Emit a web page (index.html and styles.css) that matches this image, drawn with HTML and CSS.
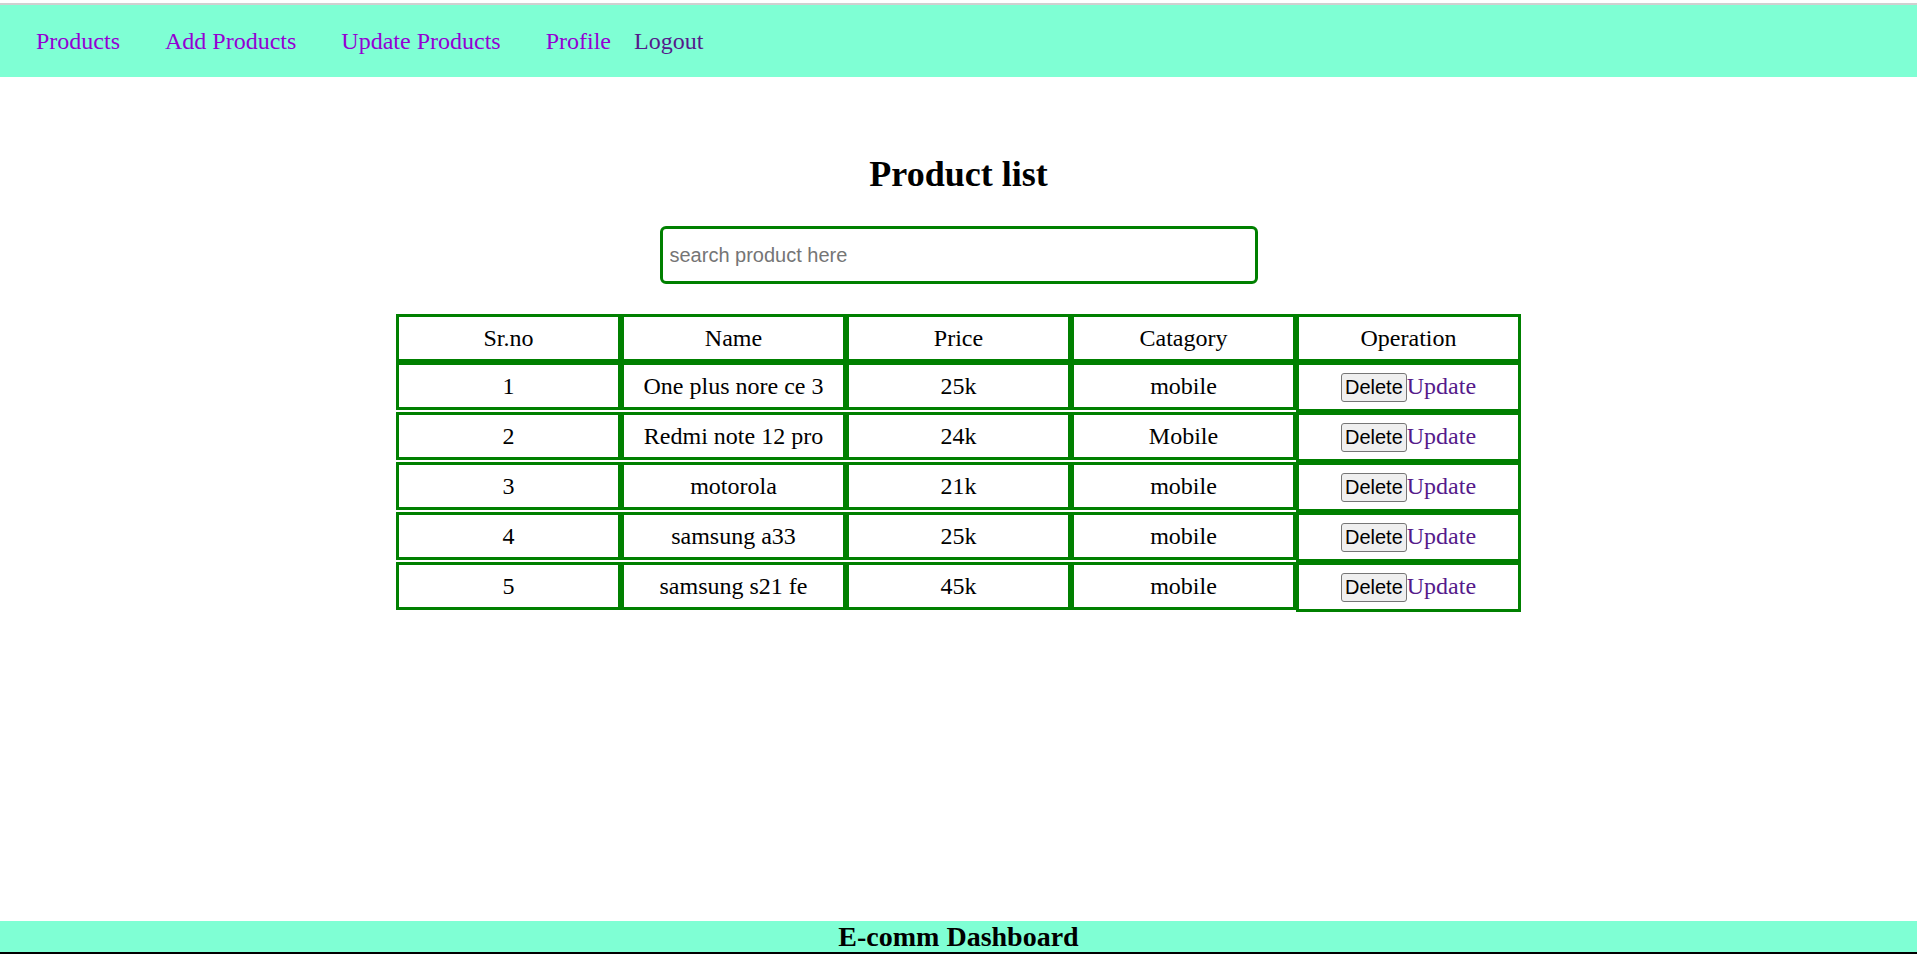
FILE: index.html
```html
<!DOCTYPE html>
<html lang="en">
<head>
<meta charset="utf-8">
<title>E-comm Dashboard</title>
<link rel="stylesheet" href="styles.css">
</head>
<body>
<div class="app">
  <nav class="nav">
    <ul class="nav-ul">
      <li class="nav-item"><a class="nav-link" href="#">Products</a></li>
      <li class="nav-item"><a class="nav-link" href="#">Add Products</a></li>
      <li class="nav-item"><a class="nav-link" href="#">Update Products</a></li>
      <li class="nav-item nav-item-tight"><a class="nav-link" href="#">Profile</a></li>
      <li class="nav-item"><a class="nav-link nav-logout" href="#">Logout</a></li>
    </ul>
  </nav>

  <main class="product-list">
    <h1 class="title">Product list</h1>
    <input class="search-box" type="text" placeholder="search product here">
    <div class="table">
      <ul class="row"><li class="cell">Sr.no</li><li class="cell">Name</li><li class="cell">Price</li><li class="cell">Catagory</li><li class="cell">Operation</li></ul>
      <ul class="row"><li class="cell">1</li><li class="cell">One plus nore ce 3</li><li class="cell">25k</li><li class="cell">mobile</li><li class="cell"><button class="btn-delete">Delete</button><a class="op-link" href="#">Update</a></li></ul>
      <ul class="row"><li class="cell">2</li><li class="cell">Redmi note 12 pro</li><li class="cell">24k</li><li class="cell">Mobile</li><li class="cell"><button class="btn-delete">Delete</button><a class="op-link" href="#">Update</a></li></ul>
      <ul class="row"><li class="cell">3</li><li class="cell">motorola</li><li class="cell">21k</li><li class="cell">mobile</li><li class="cell"><button class="btn-delete">Delete</button><a class="op-link" href="#">Update</a></li></ul>
      <ul class="row"><li class="cell">4</li><li class="cell">samsung a33</li><li class="cell">25k</li><li class="cell">mobile</li><li class="cell"><button class="btn-delete">Delete</button><a class="op-link" href="#">Update</a></li></ul>
      <ul class="row"><li class="cell">5</li><li class="cell">samsung s21 fe</li><li class="cell">45k</li><li class="cell">mobile</li><li class="cell"><button class="btn-delete">Delete</button><a class="op-link" href="#">Update</a></li></ul>
    </div>
  </main>

  <footer class="footer">
    <h3 class="footer-title">E-comm Dashboard</h3>
  </footer>
</div>
</body>
</html>
```

FILE: styles.css
```css
html, body {
  margin: 0;
  padding: 0;
  background: #ffffff;
}

body {
  font-family: "Liberation Serif", "Times New Roman", serif;
  font-size: 24px;
  color: #000;
}

.app {
  padding-top: 3px;
}

.nav {
  border-top: 2px solid #d0d0d0;
  background-color: #7fffd4;
  height: 72px;
}

.nav-ul {
  list-style: none;
  margin: 0;
  padding: 0 0 0 36px;
  display: flex;
  align-items: center;
  height: 72px;
}

.nav-item {
  margin-right: 45px;
  line-height: 28px;
}

.nav-item-tight {
  margin-right: 23px;
}

.nav-link {
  color: #9400d3;
  text-decoration: none;
}

.nav-logout {
  color: #551a8b;
}

.product-list {
  display: flex;
  flex-direction: column;
  align-items: center;
}

.title {
  font-size: 36px;
  font-weight: bold;
  margin: 77px 0 31px;
  line-height: 41.4px;
}

.search-box {
  box-sizing: border-box;
  width: 598px;
  height: 58px;
  border: 3px solid #008000;
  border-radius: 6px;
  padding: 0 7px;
  font-family: "Liberation Sans", Arial, sans-serif;
  font-size: 20px;
  color: #000;
  outline: none;
  margin: 0 0 30px;
}

.search-box::placeholder {
  color: #757575;
}

.table {
  width: 1125px;
}

.row {
  list-style: none;
  margin: 0;
  padding: 0;
  white-space: nowrap;
}

.cell {
  display: inline-block;
  box-sizing: border-box;
  width: 225px;
  border: 3px solid #008000;
  padding: 7.5px;
  text-align: center;
  white-space: nowrap;
}

.btn-delete {
  font-family: "Liberation Sans", Arial, sans-serif;
  font-size: 20px;
  color: #000;
  background: #efefef;
  border: 1px solid #767676;
  border-radius: 3px;
  padding: 2px 3px 2px;
  margin: 0;
  line-height: normal;
}

.op-link {
  color: #551a8b;
  text-decoration: none;
}

.footer {
  position: fixed;
  left: 0;
  right: 0;
  bottom: 0;
  background-color: #7fffd4;
  border-bottom: 2px solid #000;
  text-align: center;
}

.footer-title {
  margin: 0;
  font-size: 28px;
  font-weight: bold;
  line-height: 31px;
}
```
